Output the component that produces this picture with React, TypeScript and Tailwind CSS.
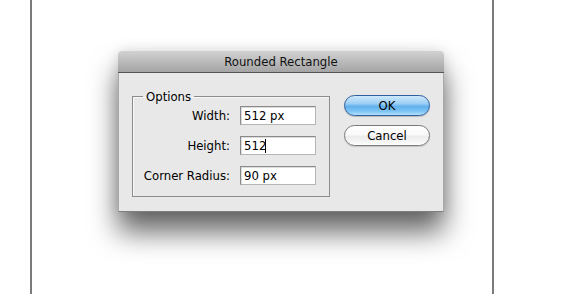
import React from "react";

const font = {
  fontFamily: '"DejaVu Sans Condensed", "DejaVu Sans", sans-serif',
};

function Field({ label, value, caret }: { label: string; value: string; caret?: boolean }) {
  return (
    <div className="flex items-center">
      <div className="w-[97px] text-right text-[13px] leading-[15px] text-black">{label}</div>
      <div className="ml-[10px] flex h-[19px] w-[76px] items-center border border-t-[#8a8a8a] border-l-[#8a8a8a] border-r-[#b5b5b5] border-b-[#b5b5b5] bg-white pl-[3px] text-[13px] leading-[15px] text-black shadow-[inset_1px_1px_0_#dcdcdc]">
        <span>{value}</span>
        {caret && <span className="ml-[-1px] inline-block h-[14px] w-px bg-black" />}
      </div>
    </div>
  );
}

export default function App() {
  return (
    <div className="h-[294px] w-[579px] overflow-hidden bg-white pl-[30px] font-stretch-condensed" style={font}>
      <div className="h-full w-[464px] border-x-2 border-[#7b7b7b] pl-[86px] pt-[51px]">
        <div className="flex h-[161px] w-[326px] flex-col rounded-t-[4px] shadow-[0_20px_28px_rgba(0,0,0,0.6),0_0_14px_rgba(0,0,0,0.12)]">
          <div className="flex h-[22px] items-center justify-center rounded-t-[4px] border-b border-[#555] bg-[linear-gradient(to_bottom,#d2d2d2,#a4a4a4)] text-[13px] leading-[15px] text-[#111]">
            Rounded Rectangle
          </div>
          <div className="flex flex-1 items-start border-x border-b border-x-[#a9a9a9] border-b-[#7e7e7e] bg-[#e8e8e8] pl-[13px] pr-[13px] pt-[16px]">
            <fieldset className="w-[198px] border border-[#8c8c8c] pb-[11px] pt-[2px] shadow-[inset_1px_1px_0_#f7f7f7]">
              <legend className="ml-[10px] px-[3px] text-[13px] leading-[15px] text-black">Options</legend>
              <div className="flex flex-col gap-[11px]">
                <Field label="Width:" value="512 px" />
                <Field label="Height:" value="512" caret />
                <Field label="Corner Radius:" value="90 px" />
              </div>
            </fieldset>
            <div className="ml-[14px] mt-[6px] flex flex-col gap-[9px]">
              <div className="flex h-[21px] w-[86px] items-center justify-center rounded-full border border-[#2f5f9e] bg-[linear-gradient(to_bottom,#cfe8fb_0%,#9ccff5_40%,#62b1ec_55%,#7cc4f4_80%,#b4e2fc_100%)] text-[13px] leading-[15px] text-black shadow-[0_1px_1px_rgba(0,0,0,0.2)]">
                OK
              </div>
              <div className="flex h-[21px] w-[86px] items-center justify-center rounded-full border border-[#7a7a7a] bg-[linear-gradient(to_bottom,#ffffff_0%,#f9f9f9_45%,#ececec_55%,#f6f6f6_85%,#ffffff_100%)] text-[13px] leading-[15px] text-black shadow-[0_1px_1px_rgba(0,0,0,0.15)]">
                Cancel
              </div>
            </div>
          </div>
        </div>
      </div>
    </div>
  );
}
